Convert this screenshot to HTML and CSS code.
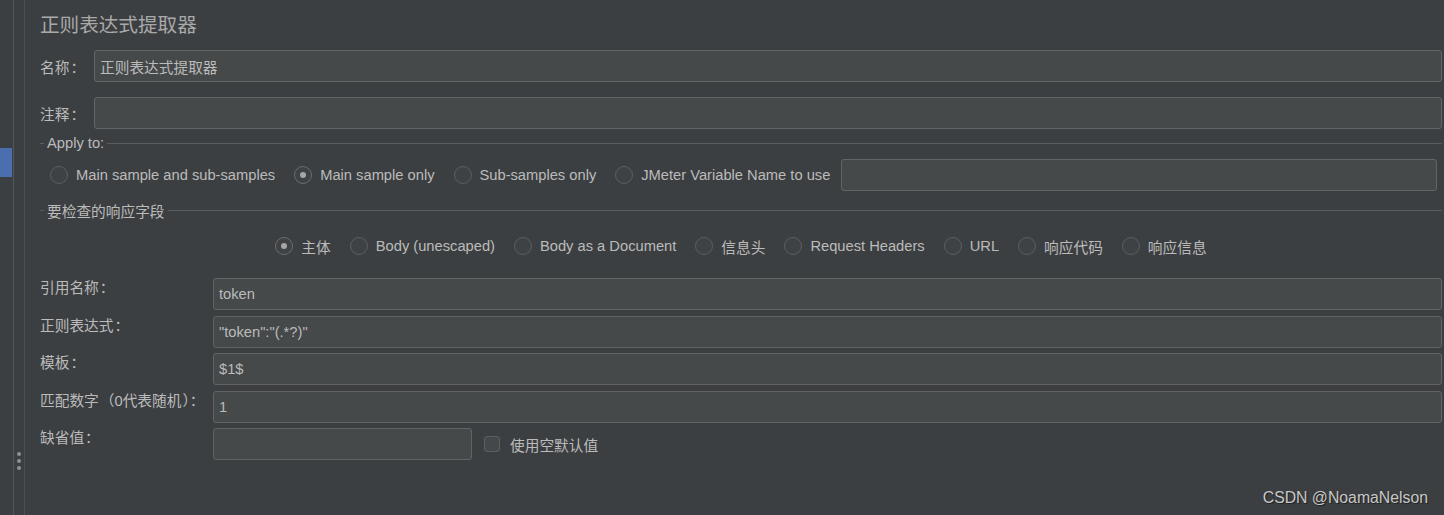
FILE: index.html
```html
<!DOCTYPE html>
<html lang="zh-CN">
<head>
  <meta charset="UTF-8">
  <title>正则表达式提取器</title>
  <link rel="stylesheet" href="styles.css">
</head>
<body>
  <div class="app">
    <!-- left tree edge -->
    <div class="sidebar">
      <div class="selected-node"></div>
    </div>
    <div class="splitter">
      <span class="dot"></span>
      <span class="dot"></span>
      <span class="dot"></span>
    </div>

    <div class="main">
      <h2 class="title">正则表达式提取器</h2>

      <div class="row">
        <label class="row-label">名称<span class="punct">：</span></label>
        <div class="field">正则表达式提取器</div>
      </div>
      <div class="row row-comment">
        <label class="row-label">注释<span class="punct">：</span></label>
        <div class="field"></div>
      </div>

      <!-- Apply to -->
      <div class="group-title">
        <span class="dash"></span>
        <span class="group-text">Apply to:</span>
        <span class="line"></span>
      </div>
      <div class="apply-row">
        <span class="option"><span class="radio"></span>Main sample and sub-samples</span>
        <span class="option"><span class="radio checked"></span>Main sample only</span>
        <span class="option"><span class="radio"></span>Sub-samples only</span>
        <span class="option"><span class="radio"></span>JMeter Variable Name to use</span>
        <div class="field var-field"></div>
      </div>

      <!-- fields to check -->
      <div class="group-title group-check">
        <span class="dash"></span>
        <span class="group-text">要检查的响应字段</span>
        <span class="line"></span>
      </div>
      <div class="check-row">
        <span class="option"><span class="radio checked"></span>主体</span>
        <span class="option"><span class="radio"></span>Body (unescaped)</span>
        <span class="option"><span class="radio"></span>Body as a Document</span>
        <span class="option"><span class="radio"></span>信息头</span>
        <span class="option"><span class="radio"></span>Request Headers</span>
        <span class="option"><span class="radio"></span>URL</span>
        <span class="option"><span class="radio"></span>响应代码</span>
        <span class="option"><span class="radio"></span>响应信息</span>
      </div>

      <div class="form">
        <label class="form-label">引用名称<span class="punct">：</span></label>
        <div class="field">token</div>

        <label class="form-label">正则表达式<span class="punct">：</span></label>
        <div class="field">"token":"(.*?)"</div>

        <label class="form-label">模板<span class="punct">：</span></label>
        <div class="field">$1$</div>

        <label class="form-label">匹配数字<span class="punct">（</span>0代表随机<span class="punct">）：</span></label>
        <div class="field">1</div>

        <label class="form-label">缺省值<span class="punct">：</span></label>
        <div class="default-row">
          <div class="field default-field"></div>
          <span class="checkbox"></span>
          <span class="check-text">使用空默认值</span>
        </div>
      </div>
    </div>
  </div>

  <div class="watermark">CSDN @NoamaNelson</div>
</body>
</html>
```

FILE: styles.css
```css
body {
  margin: 0;
  width: 1444px;
  height: 515px;
  overflow: hidden;
  background-color: #3c3f41; /* darcula panel */
  font-family: "Liberation Sans", "Noto Sans CJK SC", sans-serif;
  font-size: 14.7px;
  color: #bbbbbb;
}
.app {
  display: flex;
  height: 515px;
}
.sidebar {
  width: 13px;
  border-right: 1px solid #55585a;
}
.selected-node {
  width: 12px;
  height: 29px;
  margin-top: 148px;
  background-color: #4b6eaf;
}
.splitter {
  width: 11px;
  border-right: 1px solid #4d5052;
  display: flex;
  flex-direction: column;
  align-items: center;
  gap: 3px;
  padding-top: 452px;
  box-sizing: border-box;
}
.dot {
  width: 4px;
  height: 4px;
  border-radius: 50%;
  background-color: #8e9092;
}
.main {
  flex: 1;
  padding: 12px 2px 0 15px;
}
.title {
  margin: 0;
  font-family: "Noto Sans CJK SC", sans-serif;
  font-size: 19.6px;
  font-weight: normal;
  line-height: 24px;
  color: #a9a9a9;
}
/* centred full-width punctuation, as in the Windows UI font */
.punct {
  font-family: "Noto Sans CJK TC", sans-serif;
  padding-left: 1px;
}
.field {
  height: 32px;
  box-sizing: border-box;
  padding: 0 5px;
  background-color: #45494a;
  border: 1px solid #646464;
  border-radius: 3px;
  display: flex;
  align-items: center;
  color: #bbbbbb;
}
.row {
  display: flex;
  align-items: center;
  margin-top: 14px;
}
.row-comment {
  margin-top: 15px;
}
.row-label {
  width: 54px;
  flex-shrink: 0;
}
.row .field {
  flex: 1;
}
.group-title {
  display: flex;
  align-items: center;
  height: 20px;
  margin-top: 4px;
}
.group-check {
  margin-top: 9px;
}
.dash {
  width: 4px;
  border-top: 1px solid #5a5d5f;
}
.group-text {
  padding: 0 3px;
}
.line {
  flex: 1;
  border-top: 1px solid #5a5d5f;
}
.option {
  display: flex;
  align-items: center;
  gap: 8px;
  white-space: nowrap;
}
.radio {
  width: 18px;
  height: 18px;
  box-sizing: border-box;
  border: 1px solid #5c5f61;
  border-radius: 50%;
  background-color: #3e4244;
  display: flex;
  align-items: center;
  justify-content: center;
}
.radio.checked {
  border-color: #6a6c6e;
}
.radio.checked::after {
  content: "";
  width: 6px;
  height: 6px;
  border-radius: 50%;
  background-color: #a6a6a6;
}
.apply-row {
  display: flex;
  align-items: center;
  gap: 19px;
  margin-top: 6px;
  padding: 0 5px 0 10px;
}
.var-field {
  flex: 1;
  margin-left: -8px;
}
.check-row {
  display: flex;
  justify-content: center;
  align-items: center;
  gap: 19px;
  height: 20px;
  margin-top: 16px;
}
.form {
  display: grid;
  grid-template-columns: 173px 1fr;
  row-gap: 5.5px;
  margin-top: 22px;
}
.form-label {
  line-height: 20px;
  margin-top: -1px;
}
.default-row {
  display: flex;
  align-items: center;
}
.default-field {
  width: 259px;
}
.checkbox {
  width: 16px;
  height: 16px;
  box-sizing: border-box;
  margin-left: 12px;
  border: 1px solid #5c6062;
  border-radius: 3px;
  background-color: #43494a;
}
.check-text {
  margin-left: 10px;
}
.watermark {
  position: absolute;
  right: 16px;
  bottom: 8px;
  font-size: 15.8px;
  color: #c8c8c8;
  text-shadow: 1px 1px 1px #1e1f20;
}
```
